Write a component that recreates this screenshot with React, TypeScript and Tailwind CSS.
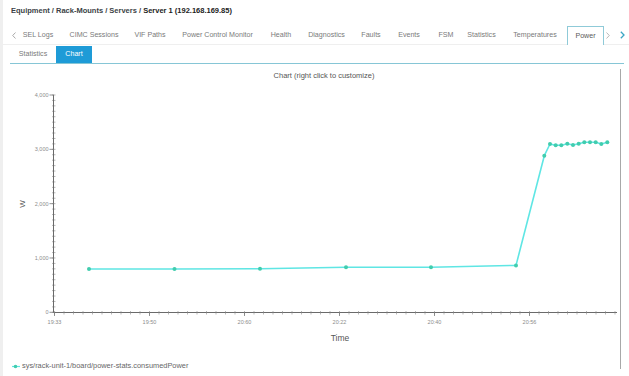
import React from "react";

const tabs: { label: string; cls: string }[] = [
  { label: "SEL Logs", cls: "w-[40px]" },
  { label: "CIMC Sessions", cls: "w-[72px]" },
  { label: "VIF Paths", cls: "w-[40px]" },
  { label: "Power Control Monitor", cls: "w-[95px]" },
  { label: "Health", cls: "w-[32px]" },
  { label: "Diagnostics", cls: "w-[59px]" },
  { label: "Faults", cls: "w-[30px]" },
  { label: "Events", cls: "w-[46px]" },
  { label: "FSM", cls: "w-[28px]" },
  { label: "Statistics", cls: "w-[43px]" },
  { label: "Temperatures", cls: "w-[64px]" },
];

const pts: [number, number][] = [
  [89, 269],
  [174.5, 269],
  [260, 268.8],
  [346, 267.2],
  [431, 267.2],
  [516, 265.4],
  [544.3, 155.7],
  [550, 144],
  [555.7, 145.3],
  [561.3, 145.3],
  [567.3, 143.7],
  [573, 145],
  [578.7, 143.7],
  [584.3, 142.3],
  [590, 142.3],
  [595.7, 142.3],
  [601.3, 144],
  [607.3, 142.3],
];

const yLabels = ["4,000", "3,000", "2,000", "1,000", "0"];
const xLabels = ["19:33", "19:50", "20:60", "20:22", "20:40", "20:56"];

function Chart() {
  const yMajor = (i: number) => 95 + i * 54.33;
  const minorY: number[] = [];
  for (let i = 0; i <= 40; i++) minorY.push(95 + i * 5.433);
  const minorX: number[] = [];
  for (let x = 54.5; x <= 617; x += 9.5) minorX.push(x);
  const d = pts.map((p, i) => `${i === 0 ? "M" : "L"}${p[0]} ${p[1]}`).join(" ");
  return (
    <svg width={617} height={278} viewBox="3 81 617 278" className="block">
      {minorY.map((y, i) => (
        <line key={"my" + i} x1={52} x2={55.5} y1={y} y2={y} stroke="#8a8a8a" strokeWidth={0.6} />
      ))}
      <line x1={53.5} y1={95} x2={53.5} y2={312.5} stroke="#6a6a6a" strokeWidth={1} />
      {yLabels.map((l, i) => (
        <g key={l}>
          <line x1={49.5} x2={54} y1={yMajor(i)} y2={yMajor(i)} stroke="#777" strokeWidth={0.8} />
          <text
            x={48.5}
            y={yMajor(i) + 2}
            textAnchor="end"
            fontSize={5.5}
            fill="#8c8c8c"
            fontFamily="Liberation Sans, Arial, sans-serif"
          >
            {l}
          </text>
        </g>
      ))}
      <line x1={53.5} y1={312.5} x2={617} y2={312.5} stroke="#6a6a6a" strokeWidth={1} />
      {minorX.map((x, i) => (
        <line key={"mx" + i} x1={x} x2={x} y1={311} y2={314.5} stroke="#8a8a8a" strokeWidth={0.6} />
      ))}
      {xLabels.map((l, i) => {
        const x = 54.5 + i * 95;
        return (
          <g key={l + i}>
            <line x1={x} x2={x} y1={312.5} y2={316} stroke="#777" strokeWidth={0.8} />
            <text
              x={x}
              y={324}
              textAnchor="middle"
              fontSize={5.5}
              fill="#8c8c8c"
              fontFamily="Liberation Sans, Arial, sans-serif"
            >
              {l}
            </text>
          </g>
        );
      })}
      <text
        x={340}
        y={341}
        textAnchor="middle"
        fontSize={8.5}
        fill="#555"
        fontFamily="Liberation Sans, Arial, sans-serif"
      >
        Time
      </text>
      <text
        x={25}
        y={204}
        textAnchor="middle"
        fontSize={8}
        fill="#555"
        transform="rotate(-90 25 204)"
        fontFamily="Liberation Sans, Arial, sans-serif"
      >
        W
      </text>
      <path d={d} fill="none" stroke="#5fe6e4" strokeWidth={1.6} strokeLinejoin="round" />
      {pts.map((p, i) => (
        <circle key={i} cx={p[0]} cy={p[1]} r={2} fill="#41cdae" />
      ))}
    </svg>
  );
}

export default function App() {
  return (
    <div
      className="w-[629px] h-[376px] overflow-hidden bg-white border-l-[3px] border-[#efefef] text-[#555]"
      style={{ fontFamily: '"Liberation Sans", Arial, sans-serif' }}
    >
      <div className="h-[26px] pt-[5px] pl-[8px] leading-[12px] text-[7.5px] font-bold text-[#3b3f45] whitespace-nowrap">
        Equipment / Rack-Mounts / Servers / <span className="text-[#222]">Server 1 (192.168.169.85)</span>
      </div>
      <div className="h-[19px] flex items-stretch text-[7.1px] text-[#7a7a7a] border-b border-[#efefef] whitespace-nowrap">
        <div className="w-[15px] flex items-center pl-[9px]">
          <svg width="4" height="7" viewBox="0 0 4 7">
            <path d="M3.5 0.5 L0.7 3.5 L3.5 6.5" fill="none" stroke="#a0a0a0" strokeWidth="0.9" />
          </svg>
        </div>
        {tabs.map((t) => (
          <div key={t.label} className={`${t.cls} flex items-center justify-center`}>
            {t.label}
          </div>
        ))}
        <div className="w-[37px] -mb-px bg-white border-t border-l border-r border-[#8fcad8] flex items-center justify-center text-[#5a5a5a]">
          Power
        </div>
        <div className="flex items-center pl-[2px]">
          <svg width="4" height="7" viewBox="0 0 4 7">
            <path d="M0.5 0.5 L3.3 3.5 L0.5 6.5" fill="none" stroke="#b0b0b0" strokeWidth="0.9" />
          </svg>
        </div>
        <div className="flex items-center pl-[10px]">
          <svg width="5" height="8" viewBox="0 0 5 8">
            <path d="M0.8 0.8 L4 4 L0.8 7.2" fill="none" stroke="#3aa6c4" strokeWidth="1.3" />
          </svg>
        </div>
      </div>
      <div className="ml-[7px] w-[614px] h-[19px] border-b border-[#86c6d6] flex items-end text-[7.1px] whitespace-nowrap">
        <div className="w-[46px] h-[17px] flex items-center justify-center text-[#7a7a7a]">Statistics</div>
        <div className="w-[36px] h-[17px] flex items-center justify-center bg-[#1e9bd7] text-white">Chart</div>
      </div>
      <div className="mt-[5px] w-[618px] h-[300px] border-r border-[#a8a8a8]">
        <div className="h-[12px] leading-[13px] pl-[25px] text-center text-[7.5px] text-[#555]">
          Chart (right click to customize)
        </div>
        <Chart />
        <div className="h-[14px] flex items-center pl-[9px] text-[7.4px] text-[#666] whitespace-nowrap">
          <svg width="9" height="5" viewBox="0 0 9 5" className="mr-[1px]">
            <line x1="0" y1="2.5" x2="8" y2="2.5" stroke="#5fe6e4" strokeWidth="1.2" />
            <circle cx="3.5" cy="2.5" r="1.8" fill="#41cdae" />
          </svg>
          sys/rack-unit-1/board/power-stats.consumedPower
        </div>
      </div>
    </div>
  );
}
